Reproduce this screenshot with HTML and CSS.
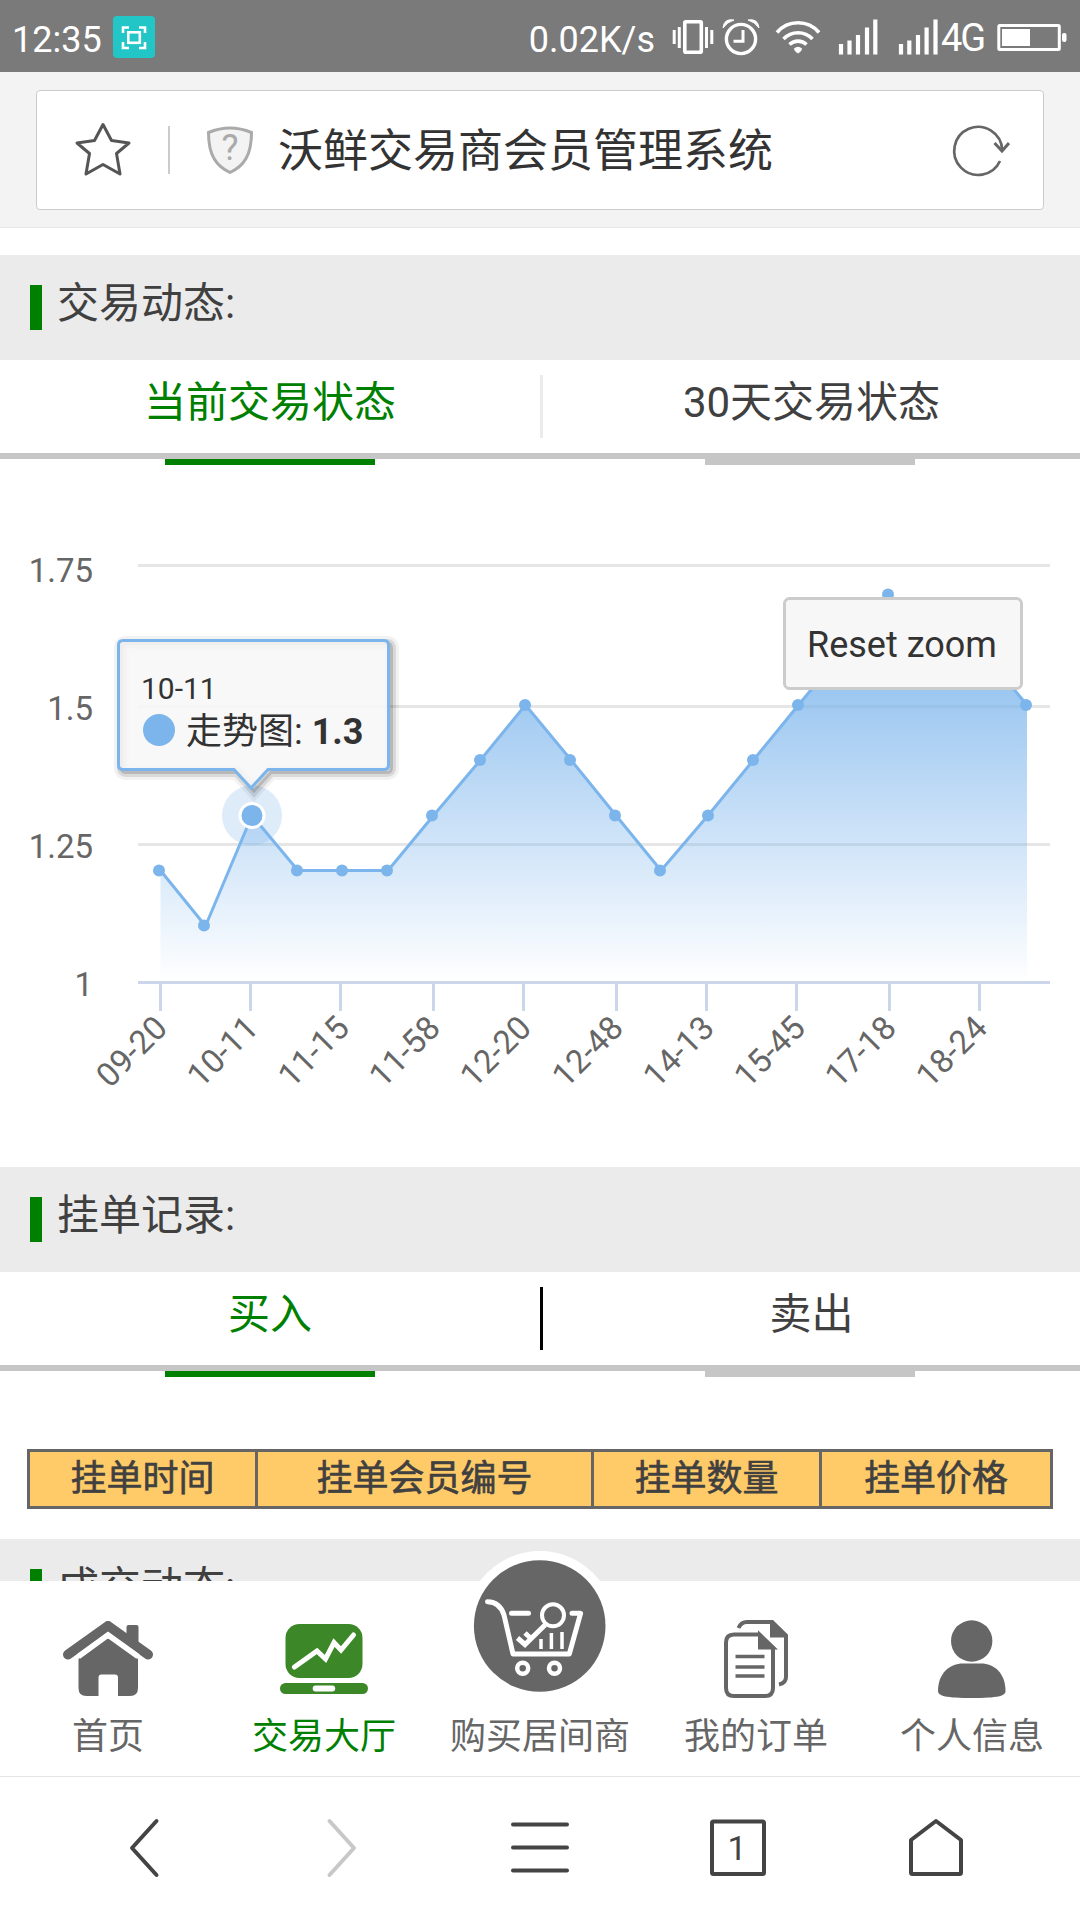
FILE: index.html
```html
<!DOCTYPE html>
<html lang="zh-CN">
<head>
    <meta charset="UTF-8">
    <meta name="viewport" content="width=device-width, initial-scale=1.0">
    <title>沃鲜交易商会员管理系统</title>
    <link rel="stylesheet" href="styles.css">
</head>
<body>
    <!-- Phone status bar -->
    <div class="status-bar">
        <span class="status-time">12:35</span>
        <svg class="status-app" width="42" height="42" viewBox="0 0 42 42">
            <rect width="42" height="42" rx="4" fill="#22c6c6"/>
            <path d="M10 17v-5.5h6M26 11.5h6V17M32 26v6h-6M16 32h-6v-6" fill="none" stroke="#fff" stroke-width="2.6"/>
            <rect x="15.3" y="16.3" width="11.5" height="10.5" fill="none" stroke="#fff" stroke-width="2.6"/>
        </svg>
        <span class="status-speed">0.02K/s</span>
        <svg class="status-icons" width="416" height="72" viewBox="0 0 416 72">
            <rect x="20.8" y="21.8" width="16.5" height="30.5" rx="1" fill="none" stroke="#fff" stroke-width="3.6"/>
            <path d="M10.2 30v14M15.3 27v21M42.5 27v21M47.8 30v14" stroke="#fff" stroke-width="3"/>
            <circle cx="77" cy="39" r="14.6" fill="none" stroke="#fff" stroke-width="3.4"/>
            <path d="M79 30v11.3h-9.5" fill="none" stroke="#fff" stroke-width="3"/>
            <path d="M59 28Q60 18 70 20Q63 22 59 28ZM95 28Q94 18 84 20Q91 22 95 28Z" fill="#fff" stroke="#fff"/>
            <path d="M113 32.5A27.5 27.5 0 0 1 155 32.5M119.5 39A20 20 0 0 1 148.5 39M125.5 44.5A12.5 12.5 0 0 1 142.5 44.5" fill="none" stroke="#fff" stroke-width="3.6"/>
            <path d="M130 48.5Q134 45 138 48.5Q138 51 134 53.5Q130 51 130 48.5Z" fill="#fff"/>
            <path d="M177 44v10.6M185.5 40.5v14M194 35v19.6M203 27.5v27M211.3 19.5v35" stroke="#fff" stroke-width="4.2"/>
            <path d="M237 44v10.6M245.3 40.5v14M254 35v19.6M262.6 27.5v27M271.5 19.5v35" stroke="#fff" stroke-width="4.2"/>
            <text class="network" x="277" y="50.5">4G</text>
            <rect x="334.8" y="25.5" width="60.5" height="24" rx="1" fill="none" stroke="#fff" stroke-width="3"/>
            <rect x="338" y="29" width="28" height="17" fill="#fff"/>
            <rect x="398" y="33" width="4.5" height="9" rx="2" fill="#fff"/>
        </svg>
    </div>

    <!-- Browser address bar -->
    <div class="address-bar">
        <div class="address-box">
            <svg class="star" width="58" height="58" viewBox="0 0 58 58">
                <path d="M29 3.5L37.5 19.5L55 22L42.5 32.5L46 53L29 43.5L12 53L15.5 32.5L3 22L20.5 19.5Z" fill="none" stroke="#555" stroke-width="3" stroke-linejoin="round"/>
            </svg>
            <span class="address-line"></span>
            <svg class="shield" width="50" height="52" viewBox="0 0 50 52">
                <path d="M3.5 8.5Q25 -.5 46.5 8.5C46.5 31 39 42 25 48.5C11 42 3.5 31 3.5 8.5Z" fill="#f3f3f3" stroke="#aaa" stroke-width="3"/>
                <text x="25" y="35.5">?</text>
            </svg>
            <span class="address-title">沃鲜交易商会员管理系统</span>
            <svg class="reload" width="60" height="60" viewBox="0 0 60 60">
                <path d="M50 41A24 24 0 1 1 52.2 30" fill="none" stroke="#666" stroke-width="2.7"/>
                <path d="M44.5 23L52 31L59 23" fill="none" stroke="#666" stroke-width="3"/>
            </svg>
        </div>
    </div>

    <!-- Page content -->
    <div class="content">
        <div class="section-title">交易动态:</div>
        <div class="tabs">
            <div class="tab active">当前交易状态</div>
            <div class="tab">30天交易状态</div>
        </div>

        <svg class="chart" width="1080" height="708" viewBox="0 459 1080 708">
            <defs>
                <linearGradient id="areaFill" x1="0" y1="0" x2="0" y2="1">
                    <stop offset="0" stop-color="#7cb5ec"/>
                    <stop offset="1" stop-color="#7cb5ec" stop-opacity="0"/>
                </linearGradient>
            </defs>
            <path class="grid" d="M138 565.5H1050M138 706.5H1050M138 844.5H1050"/>
            <path class="area" d="M160.5 870.5L205.5 926L252 815.5L298 870.5H388L433.5 815.5L480.5 760L525.5 705L571 760L616 815.5L661 870.5L708 815.5L753.5 760L798.5 705L844 650L889 594.5L934 650H981L1027 705V982.5H160.5Z"/>
            <path class="axis" d="M138 982.5H1050M160.5 982v29M250.5 982v29M340.5 982v29M433.5 982v29M523.5 982v29M616.5 982v29M706.5 982v29M796.5 982v29M889.5 982v29M979.5 982v29"/>
            <path class="line" d="M160.5 870.5L205.5 926L252 815.5L298 870.5H388L433.5 815.5L480.5 760L525.5 705L571 760L616 815.5L661 870.5L708 815.5L753.5 760L798.5 705L844 650L889 594.5L934 650H981L1027 705"/>
            <g fill="#7cb5ec">
                <circle cx="159" cy="870.5" r="6"/>
                <circle cx="204" cy="925.5" r="6"/>
                <circle cx="297" cy="870.5" r="6"/>
                <circle cx="342" cy="870.5" r="6"/>
                <circle cx="387" cy="870.5" r="6"/>
                <circle cx="432" cy="815.5" r="6"/>
                <circle cx="480" cy="760" r="6"/>
                <circle cx="525" cy="705" r="6"/>
                <circle cx="570" cy="760" r="6"/>
                <circle cx="615" cy="815.5" r="6"/>
                <circle cx="660" cy="870.5" r="6"/>
                <circle cx="708" cy="815.5" r="6"/>
                <circle cx="753" cy="760" r="6"/>
                <circle cx="798" cy="705" r="6"/>
                <circle cx="888" cy="594.5" r="6"/>
                <circle cx="1026" cy="705" r="6"/>
            </g>
            <circle cx="252" cy="815.5" r="30" fill="#7cb5ec" fill-opacity=".25"/>
            <circle cx="252" cy="815.5" r="12" fill="#7cb5ec" stroke="#fff" stroke-width="3"/>

            <g class="y-labels">
                <text x="93" y="582">1.75</text>
                <text x="93" y="720">1.5</text>
                <text x="93" y="858">1.25</text>
                <text x="93" y="996">1</text>
            </g>
            <g class="x-labels">
                <text transform="translate(169 1030) rotate(-45)">09-20</text>
                <text transform="translate(260 1030) rotate(-45)">10-11</text>
                <text transform="translate(351 1030) rotate(-45)">11-15</text>
                <text transform="translate(442 1030) rotate(-45)">11-58</text>
                <text transform="translate(533 1030) rotate(-45)">12-20</text>
                <text transform="translate(625 1030) rotate(-45)">12-48</text>
                <text transform="translate(716 1030) rotate(-45)">14-13</text>
                <text transform="translate(807 1030) rotate(-45)">15-45</text>
                <text transform="translate(898 1030) rotate(-45)">17-18</text>
                <text transform="translate(989 1030) rotate(-45)">18-24</text>
            </g>

            <!-- Reset zoom button -->
            <rect x="784.5" y="598.5" width="237" height="90" rx="5" fill="#f7f7f7" stroke="#ccc" stroke-width="3"/>
            <text class="reset" x="807" y="656.5">Reset zoom</text>

            <!-- Tooltip -->
            <g fill="none" stroke="#000" transform="translate(3 3)">
                <path d="M123 640.5H384q4.5 0 4.5 4.5V765q0 4.5-4.5 4.5H268L251 788L234 769.5H123q-4.5 0-4.5-4.5V645q0-4.5 4.5-4.5Z" stroke-opacity=".05" stroke-width="15"/>
                <path d="M123 640.5H384q4.5 0 4.5 4.5V765q0 4.5-4.5 4.5H268L251 788L234 769.5H123q-4.5 0-4.5-4.5V645q0-4.5 4.5-4.5Z" stroke-opacity=".1" stroke-width="9"/>
                <path d="M123 640.5H384q4.5 0 4.5 4.5V765q0 4.5-4.5 4.5H268L251 788L234 769.5H123q-4.5 0-4.5-4.5V645q0-4.5 4.5-4.5Z" stroke-opacity=".15" stroke-width="3"/>
            </g>
            <path d="M123 640.5H384q4.5 0 4.5 4.5V765q0 4.5-4.5 4.5H268L251 788L234 769.5H123q-4.5 0-4.5-4.5V645q0-4.5 4.5-4.5Z" fill="#f7f7f7" fill-opacity=".85" stroke="#7cb5ec" stroke-width="3"/>
            <text class="tip-head" x="141" y="698.5">10-11</text>
            <circle cx="159" cy="730" r="16" fill="#7cb5ec"/>
            <text class="tip-text" x="186" y="743.5">走势图: <tspan font-weight="bold">1.3</tspan></text>
        </svg>

        <div class="section-title">挂单记录:</div>
        <div class="tabs tabs-dark">
            <div class="tab active">买入</div>
            <div class="tab">卖出</div>
        </div>

        <table class="orders">
            <tr>
                <th class="col-time">挂单时间</th>
                <th class="col-member">挂单会员编号</th>
                <th class="col-count">挂单数量</th>
                <th class="col-price">挂单价格</th>
            </tr>
        </table>

        <div class="section-title">成交动态:</div>
    </div>

    <!-- Site navigation -->
    <div class="site-nav">
        <a class="nav-item">
            <span class="nav-icon">
                <svg width="90" height="76" viewBox="0 0 90 76" fill="#666">
                    <path d="M63.5 20V6q0-2 2-2h8q2 0 2 2V30Z"/>
                    <path d="M5 33.5L45 5L85 33.5" fill="none" stroke="#666" stroke-width="10" stroke-linecap="round" stroke-linejoin="round"/>
                    <path d="M15.5 38L42 18.5Q45 16.5 48 18.5L75 38V67q0 8-8 8H55V56.5q0-3-3-3H38.5q-3 0-3 3V75H23.5q-8 0-8-8Z"/>
                    <path d="M15.5 35.5L45 14L75 35.5" fill="none" stroke="#fff" stroke-width="5.5"/>
                </svg>
            </span>
            首页
        </a>
        <a class="nav-item active">
            <span class="nav-icon">
                <svg width="88" height="70" viewBox="0 0 88 70">
                    <rect x="5.5" y="0" width="77" height="54" rx="14" fill="#3c8828"/>
                    <path d="M14.5 43L37 27L45.5 35L54 18.5L61 26L73.5 11" fill="none" stroke="#fff" stroke-width="5" stroke-linecap="round"/>
                    <rect y="59" width="88" height="11" rx="5.5" fill="#3c8828"/>
                    <rect x="32.7" y="61.5" width="22.5" height="6" rx="3" fill="#fff"/>
                </svg>
            </span>
            交易大厅
        </a>
        <a class="nav-item">
            <span class="nav-icon"></span>
            购买居间商
            <svg class="nav-cart" width="150" height="150" viewBox="0 0 150 150" fill="none" stroke="#fff">
                <circle cx="75" cy="75" r="75" fill="#fff" stroke="none"/>
                <circle cx="74.7" cy="75" r="65.8" fill="#666" stroke="none"/>
                <path d="M22.5 50.7Q35 51 39 64L48 103H104.3L115.6 62.3H107" stroke-width="5" stroke-linecap="round" stroke-linejoin="round"/>
                <path d="M46.5 62.3H63.5" stroke-width="5" stroke-linecap="round"/>
                <circle cx="88" cy="64.3" r="11" stroke-width="4"/>
                <path d="M80 74L60 93.5L52.5 87M66 87.5L60 82" stroke-width="5"/>
                <path d="M76 98V88M86.4 98V82M97 98V81" stroke-width="3.5"/>
                <circle cx="57.7" cy="117.3" r="5.5" stroke-width="4.5"/>
                <circle cx="89.5" cy="117.3" r="5.5" stroke-width="4.5"/>
            </svg>
        </a>
        <a class="nav-item">
            <span class="nav-icon">
                <svg width="64" height="78" viewBox="0 0 64 78" fill="none" stroke="#666" stroke-width="4">
                    <path d="M14.5 8Q17 2 23 2H48L62 16V57Q62 63 55 64.5"/>
                    <path d="M48 2V15.500H62Z" fill="#666"/>
                    <path d="M10 14.5H35L49 28V68q0 8-8 8H10q-8 0-8-8V22.5q0-8 8-8Z"/>
                    <path d="M36 15V27.5H49Z" fill="#666"/>
                    <path d="M11.5 36.5H40.5M11.5 47H40.5M11.5 56H40.5" stroke-width="3.6"/>
                </svg>
            </span>
            我的订单
        </a>
        <a class="nav-item">
            <span class="nav-icon">
                <svg width="68" height="78" viewBox="0 0 68 78" fill="#666">
                    <circle cx="33.7" cy="21" r="20.7"/>
                    <path d="M0 71C0 53 12 43.5 25 43.5H43C56 43.5 67.5 53 67.5 71C67.5 76 60 78 34 78C8 78 0 76 0 71Z"/>
                </svg>
            </span>
            个人信息
        </a>
    </div>

    <!-- Browser toolbar -->
    <div class="toolbar">
        <svg width="60" height="60" viewBox="0 0 60 60">
            <path d="M42.5 3L18 30L42.5 57"/>
        </svg>
        <svg class="disabled" width="60" height="60" viewBox="0 0 60 60">
            <path d="M17.5 3L42 30L17.5 57"/>
        </svg>
        <svg width="60" height="60" viewBox="0 0 60 60">
            <path d="M3 6.5H57M3 29.5H57M3 52.5H57"/>
        </svg>
        <svg width="60" height="60" viewBox="0 0 60 60">
            <rect x="4" y="3.5" width="52" height="52.500" rx="1.5"/>
            <text x="29" y="42">1</text>
        </svg>
        <svg width="60" height="60" viewBox="0 0 60 60">
            <path d="M30 3L55 22V54.5q0 1.5-1.5 1.5H6.5q-1.5 0-1.5-1.5V22Z"/>
        </svg>
    </div>
</body>
</html>
```
FILE: styles.css
```css
/* General */
* {
    box-sizing: border-box;
}

body {
    margin: 0;
    width: 1080px;
    height: 1920px;
    display: flex;
    flex-direction: column;
    overflow: hidden;
    background: #fff;
    color: #404040;
    font-family: Roboto, "Noto Sans CJK SC", sans-serif;
}

svg {
    display: block;
    flex: none;
}

/* Status bar */
.status-bar {
    flex: none;
    height: 72px;
    display: flex;
    align-items: center;
    background: #7a7a7a;
    color: #fff;
    font-size: 36px;
}

.status-time {
    width: 101px;
    margin-left: 12px;
    padding-top: 8px;
}

.status-app {
    margin-top: 2px;
}

.status-speed {
    flex: 1;
    padding: 8px 9px 0 0;
    text-align: right;
}

.network {
    fill: #fff;
    font-size: 38px;
    letter-spacing: -2px;
}

/* Address bar */
.address-bar {
    flex: none;
    height: 156px;
    padding: 18px 36px 17px;
    background: #f3f3f3;
    border-bottom: 1px solid #e6e6e6;
}

.address-box {
    height: 120px;
    display: flex;
    align-items: center;
    padding: 0 33px 0 37px;
    background: #fff;
    border: 1px solid #ccc;
    border-radius: 4px;
}

.address-line {
    width: 2px;
    height: 48px;
    margin: 0 35px 0 36px;
    background: #ccc;
}

.shield text {
    fill: #aaa;
    font-size: 36px;
    text-anchor: middle;
}

.address-title {
    flex: 1;
    margin-left: 23px;
    padding-top: 4px;
    color: #333;
    font-size: 45px;
    line-height: 60px;
}

/* Content */
.content {
    flex: 1;
    min-height: 0;
    padding-top: 27px;
    overflow: hidden;
}

.section-title {
    height: 105px;
    display: flex;
    gap: 15px;
    padding: 30px 30px 0;
    background: #ebebeb;
    font-size: 42px;
    line-height: 38px;
}

.section-title::before {
    content: "";
    width: 12px;
    height: 45px;
    background: #008000;
}

.tabs {
    display: grid;
    grid-template-columns: 1fr 1fr;
    height: 99px;
    padding-top: 15px;
    border-bottom: 6px solid #c6c6c6;
}

.tab {
    position: relative;
    height: 63px;
    font-size: 42px;
    line-height: 56px;
    text-align: center;
}

.tab + .tab {
    border-left: 3px solid #ebebeb;
}

.tabs-dark .tab + .tab {
    border-color: #000;
}

.tab.active {
    color: #008000;
}

/* Marker hanging under the tab border */
.tab::after {
    content: "";
    position: absolute;
    top: 84px;
    left: 165px;
    width: 210px;
    height: 6px;
    background: #c6c6c6;
}

.tab + .tab::after {
    left: 162px;
}

.tab.active::after {
    background: #008000;
}

/* Chart */
.grid,
.axis,
.line {
    fill: none;
    stroke-width: 3;
}

.grid {
    stroke: #e6e6e6;
}

.axis {
    stroke: #ccd6eb;
}

.line {
    stroke: #7cb5ec;
    stroke-linejoin: round;
}

.area {
    fill: url(#areaFill);
}

.y-labels,
.x-labels {
    fill: #666;
    font-size: 33px;
    text-anchor: end;
}

.reset,
.tip-head,
.tip-text {
    fill: #333;
    font-size: 36px;
}

.tip-head {
    font-size: 30px;
}

/* Orders table */
.orders {
    width: 1026px;
    margin: 78px 27px 30px;
    border-collapse: collapse;
    table-layout: fixed;
}

.orders th {
    height: 57px;
    padding: 0;
    border: 3px solid #666;
    background: #ffcb69;
    font-size: 36px;
    font-weight: 400;
    line-height: 50px;
    -webkit-text-stroke: 0.6px #404040;
}

.col-time,
.col-count {
    width: 228px;
}

.col-member {
    width: 336px;
}

/* Site navigation */
.site-nav {
    flex: none;
    display: flex;
    height: 196px;
    background: #fff;
    border-bottom: 1px solid #e6e6e6;
}

.nav-item {
    position: relative;
    flex: 1;
    padding-top: 39px;
    color: #666;
    font-size: 36px;
    line-height: 54px;
    text-align: center;
}

.nav-item.active {
    color: #008000;
}

.nav-icon {
    display: flex;
    align-items: center;
    justify-content: center;
    height: 78px;
    margin-bottom: 12px;
}

/* Round cart button sticks out of the bar */
.nav-cart {
    position: absolute;
    top: -30px;
    left: 33px;
}

/* Browser toolbar */
.toolbar {
    flex: none;
    display: flex;
    align-items: center;
    justify-content: space-around;
    height: 143px;
    padding: 0 45px 2px;
}

.toolbar svg {
    fill: none;
    stroke: #444;
    stroke-width: 4;
    stroke-linecap: round;
    stroke-linejoin: round;
}

.toolbar .disabled {
    stroke: #c8c8c8;
}

.toolbar text {
    fill: #444;
    stroke: none;
    font-size: 34px;
    text-anchor: middle;
}
```
